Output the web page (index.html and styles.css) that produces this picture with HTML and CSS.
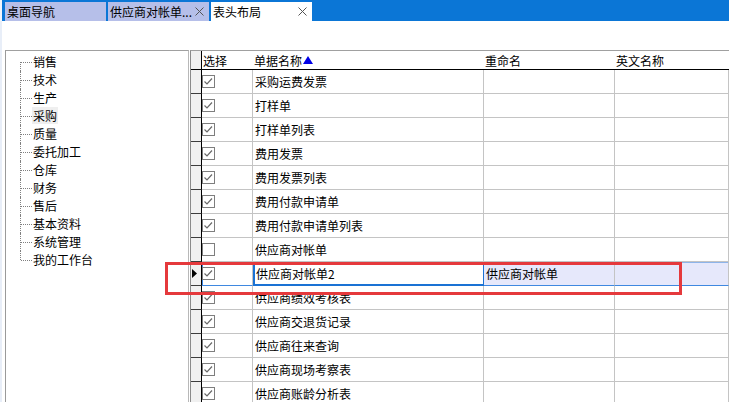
FILE: index.html
```html
<!DOCTYPE html>
<html lang="zh-CN">
<head>
    <meta charset="UTF-8">
    <meta name="viewport" content="width=device-width, initial-scale=1.0">
    <title>表头布局</title>
    <link rel="stylesheet" href="styles.css">
</head>
<body>
<div class="tabbar">
    <div class="tab">桌面导航</div>
    <div class="tab">供应商对帐单...
        <svg class="tab-close" width="9" height="9" viewBox="0 0 9 9"><path d="M0.5 0.5 L8.5 8.5 M8.5 0.5 L0.5 8.5" stroke="#555" stroke-width="1"/></svg>
    </div>
    <div class="tab active">表头布局
        <svg class="tab-close" width="9" height="9" viewBox="0 0 9 9"><path d="M0.5 0.5 L8.5 8.5 M8.5 0.5 L0.5 8.5" stroke="#555" stroke-width="1"/></svg>
    </div>
</div>

<div class="workspace">
    <div class="tree-panel">
        <ul class="tree">
            <li>销售</li>
            <li>技术</li>
            <li>生产</li>
            <li><span class="tree-current">采购</span></li>
            <li>质量</li>
            <li>委托加工</li>
            <li>仓库</li>
            <li>财务</li>
            <li>售后</li>
            <li>基本资料</li>
            <li>系统管理</li>
            <li>我的工作台</li>
        </ul>
    </div>

    <div class="grid" id="grid">
        <div class="grid-row grid-head">
            <div class="cell sel"></div>
            <div class="cell">选择</div>
            <div class="cell">单据名称<svg class="sort" width="10" height="8" viewBox="0 0 10 8"><path d="M5 0 L10 8 L0 8 Z" fill="#0000e6"/></svg></div>
            <div class="cell">重命名</div>
            <div class="cell">英文名称</div>
        </div>
    </div>
</div>

<div class="mark"></div>

<script>
    const rows = [
        { name: '采购运费发票', on: true },
        { name: '打样单', on: true },
        { name: '打样单列表', on: true },
        { name: '费用发票', on: true },
        { name: '费用发票列表', on: true },
        { name: '费用付款申请单', on: true },
        { name: '费用付款申请单列表', on: true },
        { name: '供应商对帐单', on: false },
        { name: '供应商对帐单2', on: true, rename: '供应商对帐单', current: true },
        { name: '供应商绩效考核表', on: true },
        { name: '供应商交退货记录', on: true },
        { name: '供应商往来查询', on: true },
        { name: '供应商现场考察表', on: true },
        { name: '供应商账龄分析表', on: true }
    ];

    const grid = document.getElementById('grid');
    const check = '<path d="M2.5 6.5 L5 9 L10 3.5" fill="none" stroke="#6a6a6a" stroke-width="1.2"/>';

    rows.forEach(r => {
        const row = document.createElement('div');
        row.className = 'grid-row' + (r.current ? ' current' : '');
        row.innerHTML =
            '<div class="cell sel">' + (r.current ? '<svg width="5" height="9" viewBox="0 0 5 9"><path d="M0 0 L5 4.5 L0 9 Z" fill="#000"/></svg>' : '') + '</div>' +
            '<div class="cell chk-cell"><svg class="chk" width="13" height="13" viewBox="0 0 13 13"><rect x="0.5" y="0.5" width="12" height="12" fill="#fff" stroke="#7e7e7e"/>' + (r.on ? check : '') + '</svg></div>' +
            '<div class="cell name">' + r.name + '</div>' +
            '<div class="cell rename">' + (r.rename || '') + '</div>' +
            '<div class="cell english"></div>';
        grid.appendChild(row);
    });
</script>
</body>
</html>
```

FILE: styles.css
```css
* {
    margin: 0;
    padding: 0;
    box-sizing: border-box;
}

body {
    height: 402px;
    overflow: hidden;
    background: #ffffff;
    color: #000000;
    font-family: 'Noto Sans CJK SC', 'Liberation Sans', sans-serif;
    font-size: 12px;
}

/* 顶部标签栏 */
.tabbar {
    height: 21px;
    display: flex;
    gap: 2px;
    padding: 2px 0 0 3px;
    background: #0b76d6;
    border-left: 2px solid #f2f6fc;
}

.tab {
    width: 101px;
    height: 19px;
    display: flex;
    align-items: center;
    padding-left: 2px;
    line-height: 19px;
    background: #b6bfe9;
    white-space: nowrap;
}

.tab.active {
    background: #ffffff;
}

.tab-close {
    margin-left: auto;
    margin-right: 5px;
}

/* 工作区 */
.workspace {
    height: 381px;
    display: flex;
    padding: 29px 0 0 3px;
    border-left: 2px solid #e8eef8;
}

.tree-panel {
    width: 184px;
    flex: none;
    border-top: 1px solid #a0a0a0;
    border-left: 1px solid #9a9a9a;
    border-right: 1px solid #b8b8b8;
}

.tree {
    list-style: none;
    padding: 2px 0 0 14px;
}

.tree li {
    position: relative;
    height: 18px;
    line-height: 18px;
    padding-left: 13px;
}

.tree li::before {
    content: '';
    position: absolute;
    left: 0;
    top: 0;
    height: 18px;
    border-left: 1px dotted #808080;
}

.tree li:first-child::before {
    top: 9px;
    height: 9px;
}

.tree li:last-child::before {
    height: 9px;
}

.tree li::after {
    content: '';
    position: absolute;
    left: 1px;
    top: 9px;
    width: 11px;
    border-top: 1px dotted #808080;
}

.tree-current {
    background: #efefef;
    padding: 0 1px;
    margin-left: -1px;
}

/* 表格 */
.grid {
    flex: 1;
    margin-left: 1px;
    border-top: 1px solid #a0a0a0;
    border-left: 1px solid #8a8a8a;
}

.grid-row {
    display: grid;
    grid-template-columns: 11px 51px 231px 131px 1fr;
    height: 24px;
}

.cell {
    display: flex;
    align-items: center;
    padding-left: 2px;
    border-right: 1px solid #c4c4c4;
    border-bottom: 1px solid #c4c4c4;
    white-space: nowrap;
    overflow: hidden;
}

.cell.sel {
    padding-left: 1px;
    background: #f0f0f0;
    border-right: 1px solid #000000;
    border-bottom: 1px solid #3c3c3c;
}

.grid-head {
    height: 19px;
}

.grid-head .cell {
    border-right: none;
    border-bottom: 1px solid #000000;
    padding-left: 1px;
}

.grid-head .cell.sel {
    border-right: 1px solid #000000;
}

.sort {
    margin-left: 1px;
}

.chk-cell {
    padding-left: 0;
}

.current .chk-cell {
    border-bottom-color: #3f88e0;
    box-shadow: inset 1px 0 0 #3f88e0;
}

.current .name {
    border: 1px solid #1a72d4;
    border-bottom-width: 2px;
    box-shadow: inset 1px 0 0 #1a72d4;
}

.current .rename,
.current .english {
    background: #e6e8fb;
    border-bottom-color: #3f88e0;
    box-shadow: inset 0 1px 0 #8db4ea;
}

/* 红色标注框 */
.mark {
    position: absolute;
    left: 165px;
    top: 262px;
    width: 517px;
    height: 33px;
    border: 3px solid #e5393c;
}
```
